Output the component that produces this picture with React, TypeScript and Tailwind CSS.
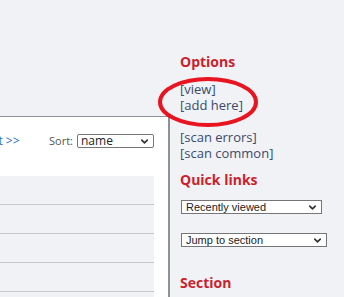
import { ChevronDown } from 'lucide-react'

const links = ['[view]', '[add here]']
const scans = ['[scan errors]', '[scan common]']

function FakeSelect({ label, className }: { label: string; className: string }) {
  return (
    <div
      className={`flex items-center justify-between border border-[#767676] bg-white h-[14px] pl-[4px] pr-[3px] text-[11px] leading-none text-[#222] ${className}`}
      style={{ fontFamily: '"Liberation Sans", Arial, sans-serif' }}
    >
      <span>{label}</span>
      <ChevronDown size={11} strokeWidth={3.5} className="text-[#333]" />
    </div>
  )
}

export default function App() {
  return (
    <div
      className="relative w-[344px] h-[297px] overflow-hidden bg-[#f1f2f6] flex"
      style={{ fontFamily: '"Open Sans", sans-serif' }}
    >
      {/* main listing */}
      <div className="w-[170px] shrink-0 pt-[116px]">
        <div className="h-full bg-white border-t border-r-2 border-[#8e9197] overflow-hidden">
          <div className="flex items-start justify-between h-[59px] pt-[16px] pr-[14px]">
            <a className="ml-[-22px] text-[12px] leading-[16px] text-[#2b6fc4]">next &gt;&gt;</a>
            <div className="flex items-center gap-[4px]">
              <span className="text-[11px] leading-[16px] text-[#555]">Sort:</span>
              <div className="flex items-center justify-between w-[77px] h-[14px] border border-[#767676] rounded-[2px] pl-[3px] pr-[3px] text-[12px] leading-none text-[#222]">
                <span>name</span>
                <ChevronDown size={11} strokeWidth={3.5} className="text-[#333]" />
              </div>
            </div>
          </div>
          <div className="w-[154px] bg-[#f1f2f6]">
            {[0, 1, 2, 3, 4].map(i => (
              <div key={i} className="h-[29px] border-b border-[#c8c8cb]" />
            ))}
          </div>
        </div>
      </div>

      {/* sidebar */}
      <div className="pl-[10px] pt-[52px] flex flex-col">
        <h3 className="text-[14px] font-bold text-[#cc1f2d] leading-[19px]">Options</h3>
        <div className="mt-[10px] flex flex-col text-[13px] leading-[16px] text-[#3b4a6b]">
          {links.map(l => (
            <a key={l}>{l}</a>
          ))}
        </div>
        <div className="mt-[16px] flex flex-col text-[13px] leading-[16px] text-[#3b4a6b]">
          {scans.map(l => (
            <a key={l}>{l}</a>
          ))}
        </div>
        <h3 className="mt-[9px] text-[14px] font-bold text-[#cc1f2d] leading-[19px]">Quick links</h3>
        <FakeSelect label="Recently viewed" className="mt-[11px] ml-[1px] w-[141px]" />
        <FakeSelect label="Jump to section" className="mt-[19px] ml-[1px] w-[146px]" />
        <h3 className="mt-[26px] text-[14px] font-bold text-[#cc1f2d] leading-[19px]">Section</h3>
      </div>

      {/* hand-drawn highlight */}
      <svg className="absolute left-[156px] top-[75px]" width="104" height="54" viewBox="0 0 104 54">
        <ellipse cx="52" cy="27" rx="48" ry="23" fill="none" stroke="#e8141f" strokeWidth="4" />
      </svg>
    </div>
  )
}
